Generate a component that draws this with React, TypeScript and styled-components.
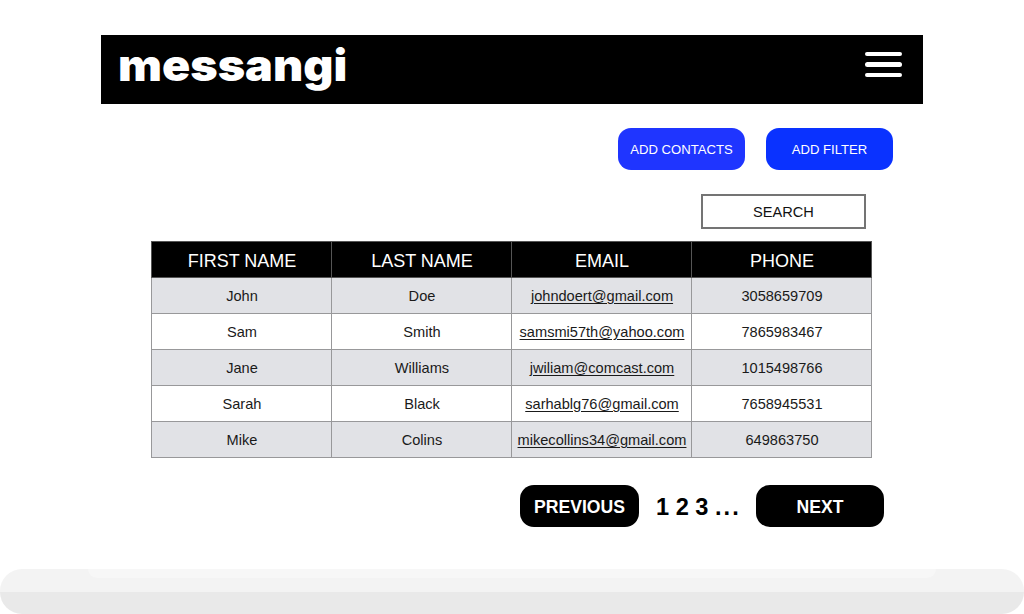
import React from "react";
import styled, { createGlobalStyle } from "styled-components";

const Global = createGlobalStyle`
  html, body { margin: 0; padding: 0; background: #fff; }
  body { font-family: "Liberation Sans", Arial, sans-serif; color: #000; }
  * { box-sizing: border-box; }
`;

const Page = styled.div`
  width: 1024px;
  height: 614px;
  overflow: hidden;
  display: flex;
  flex-direction: column;
  padding-top: 35px;
`;

const Header = styled.header`
  width: 822px;
  height: 69px;
  margin-left: 101px;
  background: #000;
  display: flex;
  align-items: center;
  justify-content: space-between;
  padding: 0 21px 0 17px;
  flex: none;
`;

const Logo = styled.div`
  font-family: Inter, sans-serif;
  font-weight: 900;
  font-size: 44px;
  line-height: 61px;
  margin-bottom: 8px;
  color: #fff;
  transform: scaleX(1.06);
  transform-origin: left center;
`;

const Burger = styled.div`
  width: 37px;
  display: flex;
  flex-direction: column;
  gap: 6px;
  margin-bottom: 10px;
`;

const BurgerLine = styled.span`
  display: block;
  height: 4.5px;
  border-radius: 3px;
  background: #fff;
`;

const Actions = styled.div`
  display: flex;
  gap: 21px;
  margin: 24px 0 0 618px;
`;

const BlueButton = styled.button<{ $color: string }>`
  width: 127px;
  height: 42px;
  border: 0;
  border-radius: 13px;
  background: ${(p) => p.$color};
  color: #fff;
  font: 13.1px "Liberation Sans", Arial, sans-serif;
  padding: 0;
`;

const SearchBox = styled.div`
  width: 165px;
  height: 36px;
  margin: 24px 0 0 701px;
  border: 2px solid #747474;
  background: #fff;
  display: flex;
  align-items: center;
  justify-content: center;
  font-size: 14.6px;
  color: #111;
`;

const Table = styled.table`
  width: 721px;
  margin: 12px 0 0 151px;
  border-collapse: collapse;
  table-layout: fixed;
`;

const HeadCell = styled.th`
  width: 180px;
  height: 36px;
  padding: 3px 0 0 1px;
  background: #000;
  border: 1px solid #555;
  color: #fff;
  font-weight: 400;
  font-size: 18px;
  text-align: center;
`;

const Row = styled.tr<{ $shade: boolean }>`
  background: ${(p) => (p.$shade ? "#e1e2e6" : "#fff")};
`;

const Cell = styled.td`
  height: 36px;
  padding: 1px 0 0 1px;
  border: 1px solid #98989a;
  font-size: 14.6px;
  color: #1a1a1a;
  text-align: center;
`;

const Mail = styled.span`
  text-decoration: underline;
  text-underline-offset: 2px;
`;

const Pager = styled.div`
  display: flex;
  align-items: center;
  margin: 27px 0 0 520px;
`;

const PagerButton = styled.button<{ $w: number }>`
  width: ${(p) => p.$w}px;
  height: 42px;
  border: 0;
  border-radius: 14px;
  background: #000;
  color: #fff;
  font: 700 17.6px "Liberation Sans", Arial, sans-serif;
  padding: 2px 0 0;
`;

const Pages = styled.div`
  width: 117px;
  padding: 2px 0 0 17px;
  font-size: 23.6px;
  font-weight: 700;
  white-space: pre;
`;

const Dots = styled.span`
  letter-spacing: 2px;
`;

const Dock = styled.div`
  position: relative;
  margin-top: 42px;
  height: 45px;
  flex: none;
  border-radius: 22px;
  overflow: hidden;
  background: linear-gradient(#f3f3f3 0 23px, #e9e9e9 23px);
`;

const DockLip = styled.div`
  position: absolute;
  top: 0;
  left: 88px;
  right: 88px;
  height: 9px;
  background: #f7f7f7;
  border-radius: 0 0 18px 18px;
`;

const rows = [
  ["John", "Doe", "johndoert@gmail.com", "3058659709"],
  ["Sam", "Smith", "samsmi57th@yahoo.com", "7865983467"],
  ["Jane", "Williams", "jwiliam@comcast.com", "1015498766"],
  ["Sarah", "Black", "sarhablg76@gmail.com", "7658945531"],
  ["Mike", "Colins", "mikecollins34@gmail.com", "649863750"],
];

export default function App() {
  return (
    <Page>
      <Global />
      <Header>
        <Logo>messangi</Logo>
        <Burger>
          <BurgerLine />
          <BurgerLine />
          <BurgerLine />
        </Burger>
      </Header>
      <Actions>
        <BlueButton $color="#1f35ff">ADD CONTACTS</BlueButton>
        <BlueButton $color="#0a32ff">ADD FILTER</BlueButton>
      </Actions>
      <SearchBox>SEARCH</SearchBox>
      <Table>
        <thead>
          <tr>
            <HeadCell>FIRST NAME</HeadCell>
            <HeadCell>LAST NAME</HeadCell>
            <HeadCell>EMAIL</HeadCell>
            <HeadCell>PHONE</HeadCell>
          </tr>
        </thead>
        <tbody>
          {rows.map((r, i) => (
            <Row key={r[2]} $shade={i % 2 === 0}>
              <Cell>{r[0]}</Cell>
              <Cell>{r[1]}</Cell>
              <Cell>
                <Mail>{r[2]}</Mail>
              </Cell>
              <Cell>{r[3]}</Cell>
            </Row>
          ))}
        </tbody>
      </Table>
      <Pager>
        <PagerButton $w={119}>PREVIOUS</PagerButton>
        <Pages>
          1 2 3 <Dots>...</Dots>
        </Pages>
        <PagerButton $w={128}>NEXT</PagerButton>
      </Pager>
      <Dock>
        <DockLip />
      </Dock>
    </Page>
  );
}
